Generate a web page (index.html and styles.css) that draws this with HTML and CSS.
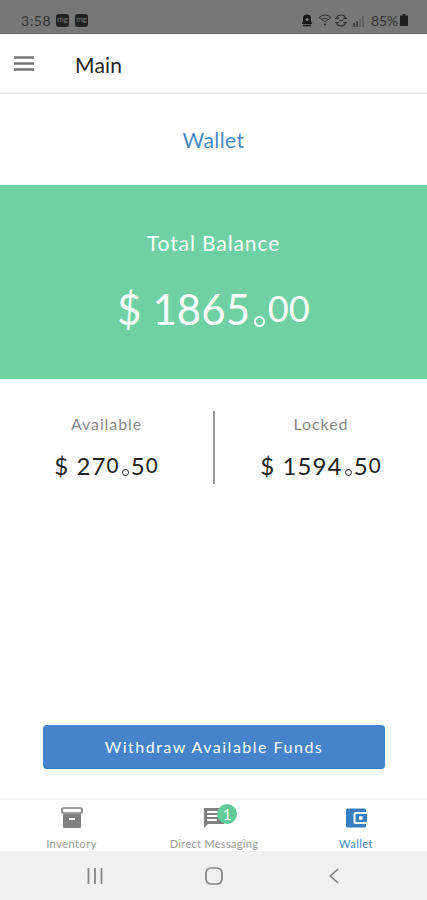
FILE: index.html
```
<!DOCTYPE html>
<html lang="en">
<head>
	<meta charset="UTF-8">
	<meta name="viewport" content="width=device-width, initial-scale=1">
	<title>Wallet</title>
	<link rel="stylesheet" href="styles.css">
</head>
<body>
<div class="status">
	<span class="status-time">3:58</span>
	<i class="app">mg</i>
	<i class="app">mg</i>
	<div class="status-right">
		<svg width="10" height="13" viewBox="0 0 10 13"><path d="M1 8V4.500a4 4 0 0 1 8 0V8l1 1v1H0V9z" fill="#171717"/><circle cx="5" cy="5.500" r="1.600" fill="#777"/><path d="M1 11.500h8" stroke="#171717" stroke-width="1.500"/></svg>
		<svg class="wifi" width="14" height="12" viewBox="0 0 14 12" fill="none" stroke="#333"><path d="M1 3.500q6-5 12 0L7 8zM3.500 5.500q3.500-2.500 7 0"/><circle cx="7" cy="10.500" r="1" fill="#222" stroke="none"/></svg>
		<svg class="sync" width="12" height="13" viewBox="0 0 12 13" fill="none" stroke="#333" stroke-width="1.200"><path d="M1.500 4q1-3 4.500-3t4.500 3M1.500 9q1 3 4.500 3t4.500-3M0 4.500h4M8 4.500h4M0 8.500h4M8 8.500h4M4 6.500h4"/></svg>
		<svg class="signal" width="12" height="11" viewBox="0 0 12 11"><path d="M1 7h2v4H1zM4 5h2v6H4z" fill="#444"/><path d="M7 3h2v8H7zM10 0h2v11h-2z" fill="#626262"/></svg>
		<span class="status-pct">85%</span>
		<svg width="8" height="12" viewBox="0 0 8 12"><path d="M2.500 0h3v1.500H8V12H0V1.500h2.500z" fill="#202020"/></svg>
	</div>
</div>

<div class="header">
	<svg width="20" height="15" viewBox="0 0 20 15"><path d="M0 1.500h20M0 7.500h20M0 13.500h20" stroke="#777" stroke-width="2.400"/></svg>
	<span class="header-title">Main</span>
</div>

<h1 class="page-title">Wallet</h1>

<div class="total">
	<p class="total-label">Total Balance</p>
	<p class="total-value">$ 1865<span class="dot">.</span><span class="zero">00</span></p>
</div>

<div class="stats">
	<div class="stat">
		<p class="stat-label">Available</p>
		<p class="stat-value">$ 27<span class="zero">0</span><span class="dot">.</span>5<span class="zero">0</span></p>
	</div>
	<div class="stat">
		<p class="stat-label">Locked</p>
		<p class="stat-value">$ 1594<span class="dot">.</span>5<span class="zero">0</span></p>
	</div>
</div>

<button class="withdraw">Withdraw Available Funds</button>

<div class="tabs">
	<div class="tab">
		<svg width="24" height="24" viewBox="0 0 24 24"><path d="M3 8h18v13a1 1 0 0 1-1 1H4a1 1 0 0 1-1-1z" fill="#808080"/><rect x="2" y="2" width="20" height="5" rx="1" fill="#fff" stroke="#808080" stroke-width="1.700"/><path d="M9 13h6" stroke="#fff" stroke-width="2"/></svg>
		<span class="tab-name">Inventory</span>
	</div>
	<div class="tab tab-msg">
		<svg width="24" height="24" viewBox="0 0 24 24"><path d="M2 2h20v16H6l-4 4z" fill="#808080"/><path d="M5 6h14M5 10h14M5 14h10" stroke="#fff" stroke-width="1.800"/></svg>
		<b class="badge">1</b>
		<span class="tab-name">Direct Messaging</span>
	</div>
	<div class="tab tab-on">
		<svg width="24" height="24" viewBox="0 0 24 24" fill="#367dc2"><path d="M22 18v2a1.500 1.500 0 0 1-1.500 1.500h-17A1.500 1.500 0 0 1 2 20V4a1.500 1.500 0 0 1 1.500-1.500h17A1.500 1.500 0 0 1 22 4v2H12A2.500 2.500 0 0 0 9.500 8.500v7a2.500 2.500 0 0 0 2.500 2.500z"/><path fill-rule="evenodd" d="M11.500 8H23v8H11.500zM15 10.200v3.600h3.600v-3.600z"/></svg>
		<span class="tab-name">Wallet</span>
	</div>
</div>

<div class="sysnav">
	<svg width="16" height="16" viewBox="0 0 16 16"><path d="M1.500 0v16M8 0v16M14.500 0v16" stroke="#858585" stroke-width="1.800"/></svg>
	<svg width="18" height="18" viewBox="0 0 18 18"><rect x="1" y="1" width="16" height="16" rx="5" fill="none" stroke="#858585" stroke-width="1.700"/></svg>
	<svg class="back" width="10" height="16" viewBox="0 0 10 16"><path d="M9 1L1.500 8 9 15" fill="none" stroke="#808080" stroke-width="1.700"/></svg>
</div>
</body>
</html>
```
FILE: styles.css
```
*{margin: 0;padding: 0;box-sizing: border-box;}
body{
	display: flex;
	flex-direction: column;
	height: 900px;
	background: #fff;
	font-family: Lato, "Open Sans", sans-serif;
	color: #222;
	overflow: hidden;
}
svg{display: block;flex: none;}

.status{
	display: flex;
	align-items: center;
	height: 34px;
	padding: 7px 19px 0 21px;
	background: #777;
	border-bottom: 1px solid #666;
	color: #333;
	font-size: 14px;
}
.status-time{width: 35px;letter-spacing: 0.6px;}
.app{
	width: 13px;
	height: 13px;
	margin-right: 6px;
	border-radius: 3px;
	background: #222;
	color: #777;
	font: 8px/11px Lato, sans-serif;
	text-align: center;
}
.status-right{display: flex;align-items: center;margin-left: auto;}
.wifi{margin-left: 6px;}
.sync{margin-left: 3px;}
.signal{margin: 2px 7px 0 5px;}
.status-pct{width: 29px;letter-spacing: -0.2px;}

.header{
	display: flex;
	align-items: center;
	height: 60px;
	padding: 0 14px;
	border-bottom: 2px solid #ececec;
}
.header-title{margin: 2px 0 0 41px;font-size: 21px;letter-spacing: 0.2px;}

.page-title{
	height: 91px;
	font-size: 21px;
	font-weight: 400;
	line-height: 92px;
	letter-spacing: 0.4px;
	text-align: center;
	color: #4a88c6;
}

.total{
	height: 194px;
	padding-top: 44px;
	background: #6fd1a3;
	color: #fff;
	text-align: center;
}
.total-label{font-size: 21px;line-height: 28px;letter-spacing: 0.9px;}
.total-value{margin-top: 22px;font-size: 42px;line-height: 60px;letter-spacing: 0.1px;}
.zero{font-size: 0.86em;line-height: 1;vertical-align: 0.09em;}
.dot{position: relative;margin: 0 0.09em;}
/* open ring over the decimal point */
.dot:after{
	content: "";
	position: absolute;
	left: 0;
	bottom: 0.16em;
	box-sizing: border-box;
	width: 0.27em;
	height: 0.27em;
	border: 0.07em solid #fff;
	border-radius: 50%;
	background: #6fd1a3;
}

.stats{
	display: flex;
	height: 73px;
	margin-top: 32px;
}
.stat{width: 213px;text-align: center;}
.stat + .stat{width: 214px;border-left: 2px solid #999;}
.stat-label{font-size: 16px;line-height: 26px;letter-spacing: 0.9px;color: #888;}
.stat-value{margin-top: 13px;font-size: 24px;line-height: 32px;letter-spacing: 1.1px;}
.stat-value .dot:after{width: 0.3em;height: 0.3em;border-color: #222;background: #fff;}

.withdraw{
	width: 342px;
	height: 44px;
	margin: 241px 0 0 43px;
	border: 0;
	border-bottom: 1px solid #3478bd;
	border-radius: 4px;
	background: #4584ca;
	color: #fff;
	font: 16px Lato, sans-serif;
	letter-spacing: 1.5px;
}

.tabs{
	display: grid;
	grid-template-columns: 143px 142px 142px;
	height: 53px;
	margin-top: 29px;
	border-top: 2px solid #f2f2f2;
}
.tab{
	position: relative;
	display: flex;
	flex-direction: column;
	align-items: center;
	padding-top: 6px;
	color: #999;
	font-size: 11px;
	white-space: nowrap;
}
.tab-name{margin-top: 7px;line-height: 14px;letter-spacing: 0.5px;}
.tab-msg .tab-name{letter-spacing: 0.3px;}
.tab-on{color: #4a88c6;}
.badge{
	position: absolute;
	top: 4px;
	left: 74px;
	width: 20px;
	height: 20px;
	border-radius: 50%;
	background: #5fcc98;
	color: #fff;
	font-size: 15px;
	font-weight: 400;
	line-height: 20px;
	text-align: center;
}

.sysnav{
	display: flex;
	align-items: center;
	flex: 1;
	gap: 102px;
	padding: 1px 0 0 87px;
	background: #f0f0f0;
}
.back{margin-left: 4px;}
```
